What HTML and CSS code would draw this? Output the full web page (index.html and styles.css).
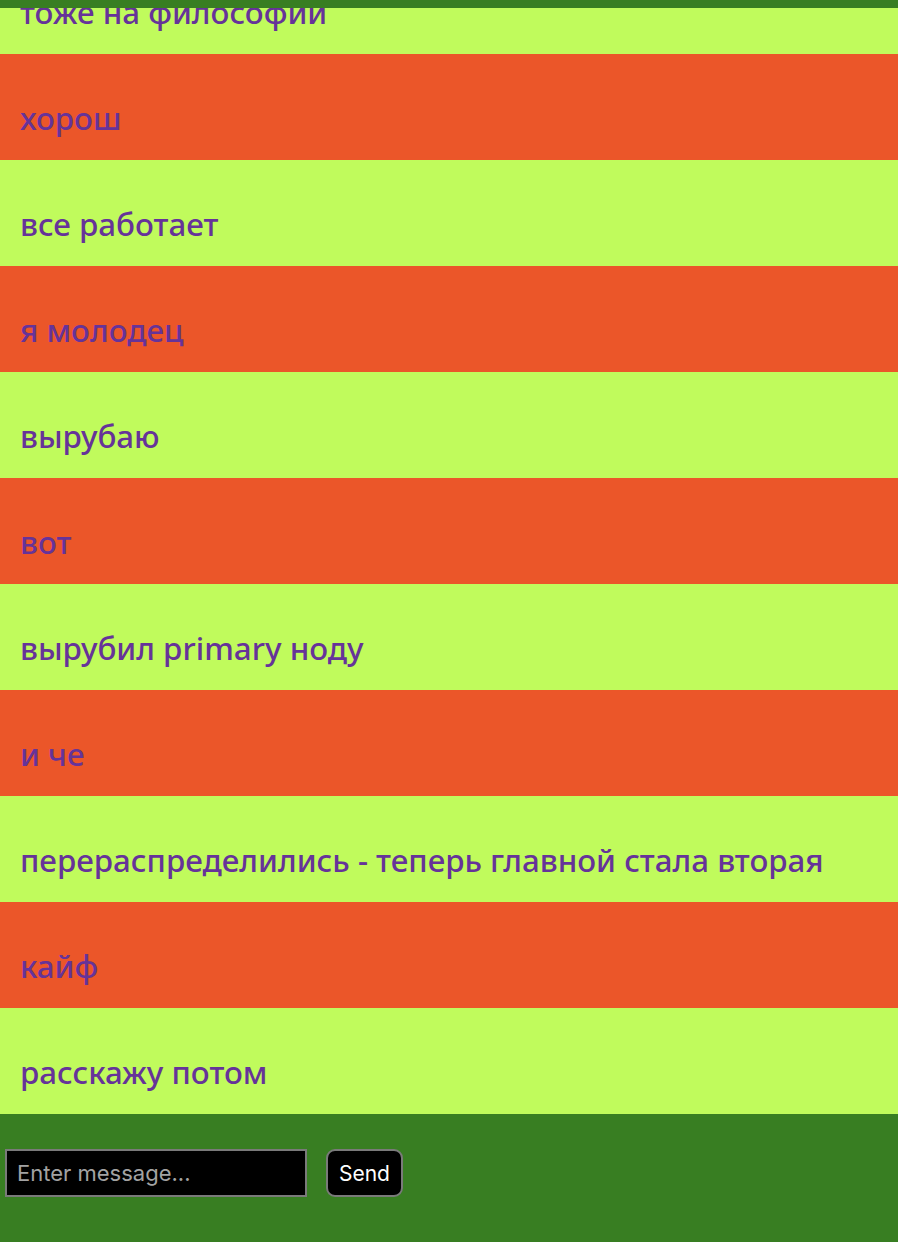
FILE: index.html
```html
<!DOCTYPE html>
<html lang="ru">
<head>
<meta charset="utf-8">
<title>Chat</title>
<link rel="stylesheet" href="styles.css">
</head>
<body>
<div class="app">
  <div class="topbar"></div>
  <div class="messages">
    <div class="msg even">тоже на философии</div>
    <div class="msg odd">хорош</div>
    <div class="msg even">все работает</div>
    <div class="msg odd">я молодец</div>
    <div class="msg even">вырубаю</div>
    <div class="msg odd">вот</div>
    <div class="msg even">вырубил primary ноду</div>
    <div class="msg odd">и че</div>
    <div class="msg even">перераспределились - теперь главной стала вторая</div>
    <div class="msg odd">кайф</div>
    <div class="msg even">расскажу потом</div>
  </div>
  <form class="composer">
    <input class="input" type="text" placeholder="Enter message...">
    <button class="send" type="button">Send</button>
  </form>
</div>
</body>
</html>
```
FILE: styles.css
```css
html, body {
  margin: 0;
  padding: 0;
  height: 100%;
}
body {
  background: #387e22;
  overflow: hidden;
}
.app {
  display: flex;
  flex-direction: column;
  height: 1242px;
}
.topbar {
  height: 8px;
  flex-shrink: 0;
  background: #387e22;
}
.messages {
  height: 1106px;
  flex-shrink: 0;
  overflow: hidden;
  display: flex;
  flex-direction: column;
  justify-content: flex-end;
}
.msg {
  flex-shrink: 0;
  height: 106px;
  box-sizing: border-box;
  padding: 22px 20px 0 20px;
  display: flex;
  align-items: center;
  font-family: "Comic Sans MS", "Noto Sans", sans-serif;
  font-size: 31.3px;
  font-weight: 500;
  color: #663399;
  white-space: nowrap;
}
.even { background: #c0fb5c; }
.odd { background: #eb5629; }
.composer {
  flex: 1;
  display: flex;
  align-items: flex-start;
  gap: 19px;
  padding: 35px 0 0 5px;
  margin: 0;
}
.input {
  width: 302px;
  height: 48px;
  box-sizing: border-box;
  background: #000;
  border: 2px solid #7a7a7a;
  color: #fff;
  padding: 0 10px;
  font-family: Inter, "Liberation Sans", sans-serif;
  font-size: 22px;
  outline: none;
}
.input::placeholder { color: #a3a3a3; }
.send {
  height: 48px;
  width: 77px;
  box-sizing: border-box;
  background: #000;
  border: 2px solid #7a7a7a;
  border-radius: 9px;
  color: #fff;
  font-family: Inter, "Liberation Sans", sans-serif;
  font-size: 21px;
  padding: 0;
}
```
